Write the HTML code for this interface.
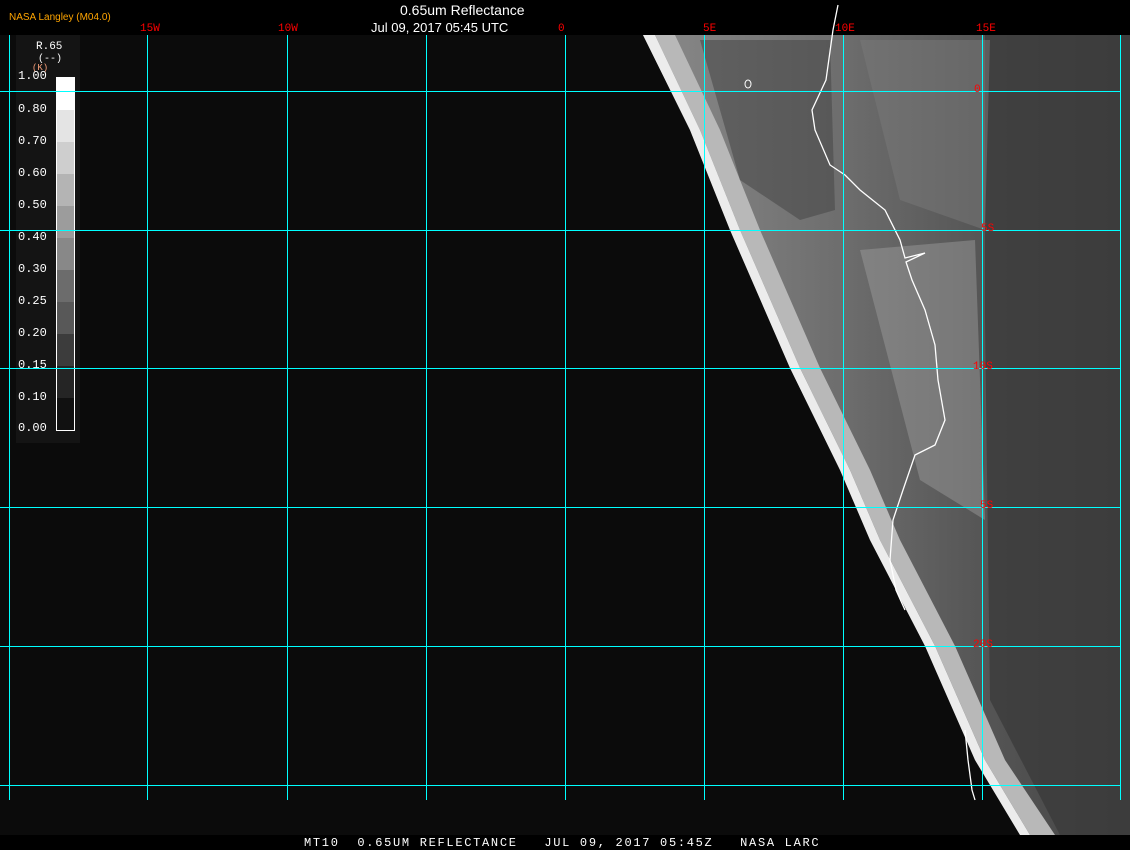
<!DOCTYPE html>
<html><head><meta charset="utf-8"><style>
html,body{margin:0;padding:0;background:#000;}
#w{position:relative;width:1130px;height:850px;overflow:hidden;background:#000;font-family:"Liberation Mono",monospace;}
.t{position:absolute;white-space:pre;}
</style></head><body><div id="w">
<svg width="1130" height="850" style="position:absolute;left:0;top:0">
<defs>
<linearGradient id="g1" x1="0" y1="0" x2="1" y2="0">
<stop offset="0" stop-color="#8a8a8a"/><stop offset="0.4" stop-color="#6e6e6e"/><stop offset="0.7" stop-color="#555"/><stop offset="1" stop-color="#444"/>
</linearGradient>
</defs>
<rect x="0" y="35" width="1130" height="800" fill="#0b0b0b"/>
<polygon points="643,35 1130,35 1130,835 1020,835 975,760 925,646 870,540 840,470 790,368 730,230 690,130" fill="url(#g1)"/>
<polygon points="643,35 655,35 700,130 740,230 800,368 850,470 880,540 935,646 985,760 1030,835 1020,835 975,760 925,646 870,540 840,470 790,368 730,230 690,130" fill="#ececec"/>
<polygon points="655,35 675,35 720,130 760,230 820,368 870,470 900,540 955,646 1005,760 1055,835 1030,835 985,760 935,646 880,540 850,470 800,368 740,230 700,130" fill="#b8b8b8"/>
<polygon points="700,40 830,40 835,210 800,220 740,180" fill="#4a4a4a" opacity="0.6"/>
<polygon points="985,35 1130,35 1130,835 1060,835 990,700 985,320" fill="#3a3a3a" opacity="0.75"/>
<polygon points="860,250 975,240 985,520 920,480" fill="#a0a0a0" opacity="0.45"/>
<polygon points="860,40 990,40 985,230 900,200" fill="#7a7a7a" opacity="0.5"/>
<polyline points="838,5 833,30 826,80 812,110 815,130 830,165 845,175 860,190 885,210 900,240 905,258 925,253 906,262 912,280 925,310 935,345 938,380 945,420 935,445 915,455 903,490 893,520 890,560 896,590 905,610" fill="none" stroke="#fff" stroke-width="1.3"/>
<polyline points="965,730 968,760 972,790 975,800" fill="none" stroke="#fff" stroke-width="1.3"/>
<ellipse cx="748" cy="84" rx="3" ry="4" fill="none" stroke="#fff" stroke-width="1"/>
<g stroke="#00ffff" stroke-width="1" shape-rendering="crispEdges">
<line x1="9.5" y1="35" x2="9.5" y2="800"/><line x1="147.5" y1="35" x2="147.5" y2="800"/><line x1="287.5" y1="35" x2="287.5" y2="800"/><line x1="426.5" y1="35" x2="426.5" y2="800"/><line x1="565.5" y1="35" x2="565.5" y2="800"/><line x1="704.5" y1="35" x2="704.5" y2="800"/><line x1="843.5" y1="35" x2="843.5" y2="800"/><line x1="982.5" y1="35" x2="982.5" y2="800"/><line x1="1120.5" y1="35" x2="1120.5" y2="800"/>
<line x1="0" y1="91.5" x2="1120" y2="91.5"/><line x1="0" y1="230.5" x2="1120" y2="230.5"/><line x1="0" y1="368.5" x2="1120" y2="368.5"/><line x1="0" y1="507.5" x2="1120" y2="507.5"/><line x1="0" y1="646.5" x2="1120" y2="646.5"/><line x1="0" y1="785.5" x2="1120" y2="785.5"/>
</g>
<rect x="16" y="35" width="64" height="408" fill="#141414"/>
<g shape-rendering="crispEdges">
<rect x="56" y="77" width="19" height="33" fill="#fff"/>
<rect x="56" y="110" width="19" height="32" fill="#e4e4e4"/>
<rect x="56" y="142" width="19" height="32" fill="#cecece"/>
<rect x="56" y="174" width="19" height="32" fill="#b4b4b4"/>
<rect x="56" y="206" width="19" height="32" fill="#9c9c9c"/>
<rect x="56" y="238" width="19" height="32" fill="#888"/>
<rect x="56" y="270" width="19" height="32" fill="#6c6c6c"/>
<rect x="56" y="302" width="19" height="32" fill="#585858"/>
<rect x="56" y="334" width="19" height="32" fill="#3c3c3c"/>
<rect x="56" y="366" width="19" height="32" fill="#252525"/>
<rect x="56" y="398" width="19" height="32" fill="#111"/>
<rect x="56.5" y="77.5" width="18" height="353" fill="none" stroke="#fff"/>
<line x1="16" y1="91.5" x2="80" y2="91.5" stroke="#0ff"/><line x1="16" y1="230.5" x2="80" y2="230.5" stroke="#0ff"/><line x1="16" y1="368.5" x2="80" y2="368.5" stroke="#0ff"/>
</g>
</svg>
<div class="t" style="left:9px;top:12px;color:#ffa500;font:10px 'Liberation Sans',sans-serif">NASA Langley (M04.0)</div>
<div class="t" style="left:400px;top:2px;color:#fff;font:14px 'Liberation Sans',sans-serif">0.65um Reflectance</div>
<div class="t" style="left:371px;top:20px;color:#fff;font:13px 'Liberation Sans',sans-serif">Jul 09, 2017 05:45 UTC</div>
<div style="color:#f00;font-size:11px">
<div class="t" style="left:140px;top:23px">15W</div>
<div class="t" style="left:278px;top:23px">10W</div>
<div class="t" style="left:558px;top:23px">0</div>
<div class="t" style="left:703px;top:23px">5E</div>
<div class="t" style="left:835px;top:23px">10E</div>
<div class="t" style="left:976px;top:23px">15E</div>
<div class="t" style="left:974px;top:84px">0</div>
<div class="t" style="left:981px;top:223px">5S</div>
<div class="t" style="left:973px;top:361px">10S</div>
<div class="t" style="left:980px;top:500px">5S</div>
<div class="t" style="left:973px;top:639px">20S</div>
</div>
<div class="t" style="left:36px;top:41px;color:#fff;font-size:11px">R.65</div>
<div class="t" style="left:38px;top:54px;color:#fff;font-size:10px">(--)</div>
<div class="t" style="left:32px;top:63px;color:#f9a07a;font-size:9px">(K)</div>
<div style="color:#fff;font-size:12px">
<div class="t" style="left:18px;top:69px">1.00</div>
<div class="t" style="left:18px;top:102px">0.80</div>
<div class="t" style="left:18px;top:134px">0.70</div>
<div class="t" style="left:18px;top:166px">0.60</div>
<div class="t" style="left:18px;top:198px">0.50</div>
<div class="t" style="left:18px;top:230px">0.40</div>
<div class="t" style="left:18px;top:262px">0.30</div>
<div class="t" style="left:18px;top:294px">0.25</div>
<div class="t" style="left:18px;top:326px">0.20</div>
<div class="t" style="left:18px;top:358px">0.15</div>
<div class="t" style="left:18px;top:390px">0.10</div>
<div class="t" style="left:18px;top:421px">0.00</div>
</div>
<div class="t" style="left:304px;top:836px;color:#fff;font-size:12px;letter-spacing:1.7px">MT10  0.65UM REFLECTANCE   JUL 09, 2017 05:45Z   NASA LARC</div>
</div></body></html>
